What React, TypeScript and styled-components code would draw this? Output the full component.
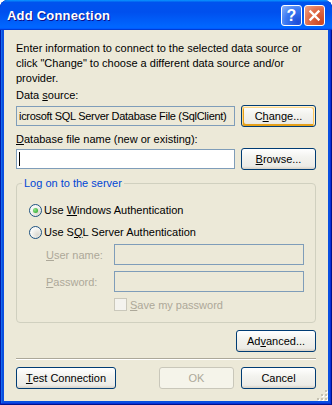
import React from "react";
import styled, { createGlobalStyle } from "styled-components";

const GlobalStyle = createGlobalStyle`
  html, body {
    margin: 0;
    padding: 0;
    background: #ffffff;
  }
  body {
    font-family: "Liberation Sans", Arial, sans-serif;
    font-size: 11px;
    color: #000;
  }
`;

const Window = styled.div`
  width: 332px;
  height: 405px;
  box-sizing: border-box;
  display: flex;
  flex-direction: column;
  background: #0a4fe0;
  border-radius: 8px 8px 0 0;
  overflow: hidden;
  box-shadow: inset 1px 0 #0019a8, inset -1px -1px #00138c, inset -2px -2px #0831d9,
    inset 2px 0 #166aee;
`;

const TitleBar = styled.div`
  height: 30px;
  flex-shrink: 0;
  display: flex;
  align-items: center;
  padding: 1px 7px 0 7px;
  box-sizing: border-box;
  background: linear-gradient(
    180deg,
    #0997ff,
    #0053ee 8%,
    #0050ee 40%,
    #0066ff 88%,
    #0066ff 93%,
    #005bff 95%,
    #003dd7 96%,
    #003dd7
  );
`;

const Title = styled.div`
  font-family: "Liberation Sans", Arial, sans-serif;
  font-weight: bold;
  font-size: 13px;
  color: #ffffff;
  text-shadow: 1px 1px #0f1089;
  letter-spacing: 0.2px;
`;

const TitleButtons = styled.div`
  margin-left: auto;
  display: flex;
  gap: 2px;
`;

const CaptionButton = styled.div<{ $variant: "help" | "close" }>`
  width: 21px;
  height: 21px;
  box-sizing: border-box;
  border: 1px solid #ffffff;
  border-radius: 3px;
  display: flex;
  align-items: center;
  justify-content: center;
  color: #ffffff;
  font-family: "Liberation Sans", Arial, sans-serif;
  font-weight: bold;
  font-size: 16px;
  background: ${(p) =>
    p.$variant === "close"
      ? "radial-gradient(circle at 85% 85%, #cc4622 0%, #e06a47 55%, #f0a68c 100%)"
      : "radial-gradient(circle at 85% 85%, #1c4bd8 0%, #3a78f2 55%, #8db5fa 100%)"};
`;

const Client = styled.div`
  position: relative;
  flex: 1;
  margin: 0 4px 4px 4px;
  background: #ece9d8;
  padding: 11px 12px 12px 12px;
  display: flex;
  flex-direction: column;
`;

const Intro = styled.p`
  margin: 0;
  line-height: 15px;
`;

const Label = styled.div<{ $gap: number }>`
  margin-top: ${(p) => p.$gap}px;
  line-height: 15px;
`;

const Row = styled.div<{ $gap: number }>`
  margin-top: ${(p) => p.$gap}px;
  display: flex;
  align-items: center;
  gap: 6px;
`;

const TextBox = styled.div<{ $readOnly?: boolean }>`
  flex: 1;
  height: 20px;
  box-sizing: border-box;
  border: 1px solid #7f9db9;
  background: ${(p) => (p.$readOnly ? "#ece9d8" : "#ffffff")};
  display: flex;
  align-items: center;
  padding: 0 2px;
  white-space: nowrap;
  overflow: hidden;
  letter-spacing: ${(p) => (p.$readOnly ? "-0.3px" : "normal")};
`;

const Caret = styled.span`
  width: 1px;
  height: 14px;
  background: #000;
`;

const Button = styled.div<{ $width: number; $hot?: boolean; $disabled?: boolean }>`
  width: ${(p) => p.$width}px;
  height: 22px;
  flex-shrink: 0;
  box-sizing: border-box;
  border: 1px solid ${(p) => (p.$disabled ? "#c9c7ba" : "#003c74")};
  border-radius: 3px;
  display: flex;
  align-items: center;
  justify-content: center;
  color: ${(p) => (p.$disabled ? "#aca899" : "#000")};
  background: ${(p) =>
    p.$disabled
      ? "#f5f4ea"
      : "linear-gradient(180deg, #ffffff, #f3f3ef 40%, #ecebe6 86%, #d6d0c5)"};
  box-shadow: ${(p) =>
    p.$hot
      ? "inset -1px 1px #fff0cf, inset 1px 2px #fdd889, inset -2px 2px #fbc761, inset 2px -2px #e5a01a"
      : "none"};
`;

const Group = styled.fieldset`
  margin: 6px 0 0 0;
  padding: 0;
  min-width: 0;
  border: 1px solid #d0d0bf;
  border-radius: 4px;
`;

const Legend = styled.legend`
  margin-left: 5px;
  padding: 0 2px;
  line-height: 15px;
  color: #0046d5;
`;

const GroupBody = styled.div`
  padding: 11px 11px 10px 12px;
  display: flex;
  flex-direction: column;
`;

const RadioRow = styled.div<{ $gap: number }>`
  margin-top: ${(p) => p.$gap}px;
  height: 16px;
  display: flex;
  align-items: center;
  gap: 2px;
`;

const Radio = styled.span<{ $checked?: boolean }>`
  width: 13px;
  height: 13px;
  box-sizing: border-box;
  border-radius: 50%;
  border: 1px solid #1c5180;
  background: radial-gradient(circle at 70% 70%, #dcd9d0, #f7f7f4 60%, #ffffff);
  display: flex;
  align-items: center;
  justify-content: center;

  &::after {
    content: "";
    display: ${(p) => (p.$checked ? "block" : "none")};
    width: 5px;
    height: 5px;
    border-radius: 50%;
    background: radial-gradient(circle at 35% 35%, #8fe48b, #21a121);
  }
`;

const FieldRow = styled.div<{ $gap: number }>`
  margin: ${(p) => p.$gap}px 0 0 17px;
  display: grid;
  grid-template-columns: 68px 1fr;
  align-items: center;
`;

const DisabledLabel = styled.span`
  color: #aca899;
`;

const DisabledBox = styled.div`
  height: 21px;
  box-sizing: border-box;
  border: 1px solid #7f9db9;
  background: #ece9d8;
`;

const CheckRow = styled.div`
  margin: 5px 0 0 85px;
  height: 15px;
  display: flex;
  align-items: center;
  gap: 3px;
  color: #aca899;
`;

const CheckBox = styled.span`
  width: 13px;
  height: 13px;
  box-sizing: border-box;
  border: 1px solid #cac8bb;
  background: #f4f3ee;
`;

const RightRow = styled.div`
  margin-top: 7px;
  display: flex;
  justify-content: flex-end;
`;

const Separator = styled.div`
  margin-top: 6px;
  height: 1px;
  background: #aca899;
  border-bottom: 1px solid #ffffff;
`;

const BottomRow = styled.div`
  margin-top: 7px;
  display: flex;
  gap: 7px;
`;

const Spacer = styled.div`
  flex: 1;
`;

const Grip = styled.svg`
  position: absolute;
  right: 0;
  bottom: 0;
`;

function CloseGlyph() {
  return (
    <svg width="13" height="13" viewBox="0 0 13 13">
      <path d="M2.5 2.5 L10.5 10.5 M10.5 2.5 L2.5 10.5" stroke="#ffffff" strokeWidth="2.4" strokeLinecap="square" />
    </svg>
  );
}

function SizeGrip() {
  const dots = [
    [8, 0],
    [8, 4],
    [4, 4],
    [8, 8],
    [4, 8],
    [0, 8],
  ];
  return (
    <Grip width="11" height="11" viewBox="0 0 11 11">
      {dots.map(([x, y]) => (
        <g key={`${x}-${y}`}>
          <rect x={x + 1} y={y + 1} width="2" height="2" fill="#ffffff" />
          <rect x={x} y={y} width="2" height="2" fill="#c5c2b2" />
        </g>
      ))}
    </Grip>
  );
}

export default function App() {
  return (
    <>
      <GlobalStyle />
      <Window>
        <TitleBar>
          <Title>Add Connection</Title>
          <TitleButtons>
            <CaptionButton $variant="help">?</CaptionButton>
            <CaptionButton $variant="close">
              <CloseGlyph />
            </CaptionButton>
          </TitleButtons>
        </TitleBar>
        <Client>
          <Intro>
            Enter information to connect to the selected data source or
            <br />
            click "Change" to choose a different data source and/or
            <br />
            provider.
          </Intro>
          <Label $gap={2}>
            Data <u>s</u>ource:
          </Label>
          <Row $gap={2}>
            <TextBox $readOnly>icrosoft SQL Server Database File (SqlClient)</TextBox>
            <Button $width={75} $hot>
              C<u>h</u>ange...
            </Button>
          </Row>
          <Label $gap={5}>
            <u>D</u>atabase file name (new or existing):
          </Label>
          <Row $gap={1}>
            <TextBox>
              <Caret />
            </TextBox>
            <Button $width={75}>
              <u>B</u>rowse...
            </Button>
          </Row>
          <Group>
            <Legend>Log on to the server</Legend>
            <GroupBody>
              <RadioRow $gap={0}>
                <Radio $checked />
                <span>
                  Use <u>W</u>indows Authentication
                </span>
              </RadioRow>
              <RadioRow $gap={6}>
                <Radio />
                <span>
                  Use S<u>Q</u>L Server Authentication
                </span>
              </RadioRow>
              <FieldRow $gap={4}>
                <DisabledLabel>
                  <u>U</u>ser name:
                </DisabledLabel>
                <DisabledBox />
              </FieldRow>
              <FieldRow $gap={6}>
                <DisabledLabel>
                  <u>P</u>assword:
                </DisabledLabel>
                <DisabledBox />
              </FieldRow>
              <CheckRow>
                <CheckBox />
                <span>
                  <u>S</u>ave my password
                </span>
              </CheckRow>
            </GroupBody>
          </Group>
          <RightRow>
            <Button $width={80}>
              Ad<u>v</u>anced...
            </Button>
          </RightRow>
          <Separator />
          <BottomRow>
            <Button $width={100}>
              <u>T</u>est Connection
            </Button>
            <Spacer />
            <Button $width={75} $disabled>
              OK
            </Button>
            <Button $width={75}>Cancel</Button>
          </BottomRow>
          <SizeGrip />
        </Client>
      </Window>
    </>
  );
}
